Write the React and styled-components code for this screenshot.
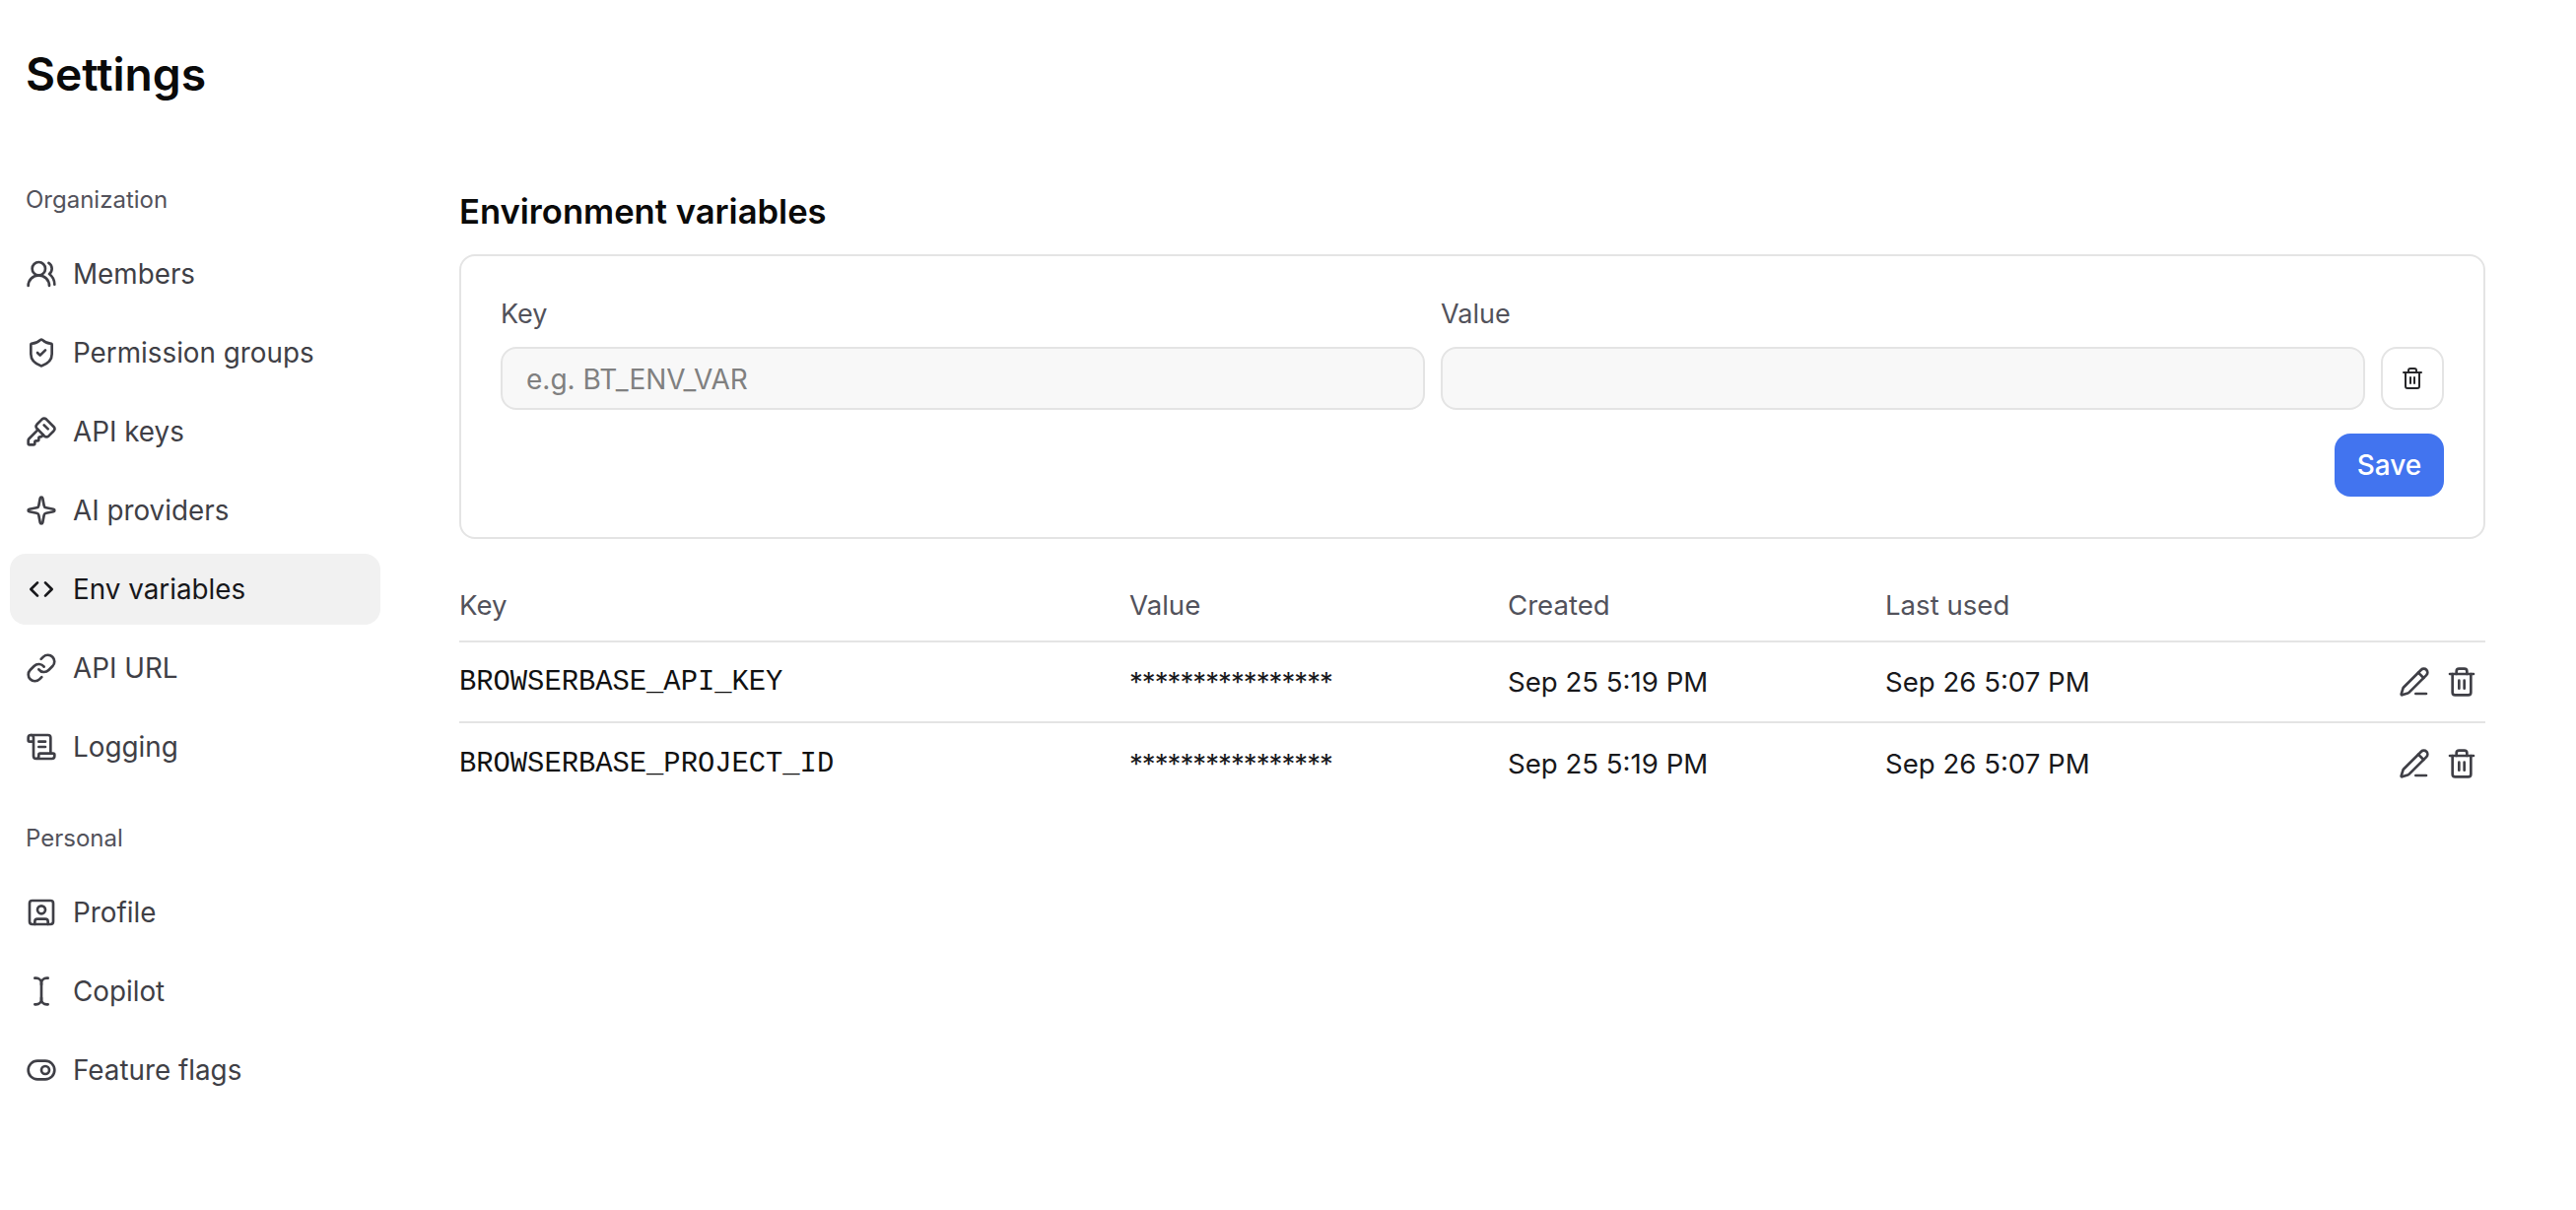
import React from "react";
import styled, { createGlobalStyle } from "styled-components";
import {
  UsersRound,
  ShieldCheck,
  KeySquare,
  Sparkle,
  ChevronsLeftRight,
  Link,
  ScrollText,
  SquareUser,
  TextCursor,
  ToggleRight,
  Trash2,
  PencilLine,
} from "lucide-react";

const GlobalStyle = createGlobalStyle`
  * {
    box-sizing: border-box;
  }
  body {
    margin: 0;
    background: #fff;
    font-family: Inter, "Liberation Sans", sans-serif;
  }
`;

const Page = styled.div`
  width: 2614px;
  height: 1228px;
  overflow: hidden;
  padding: 0 92px 0 10px;
`;

const Title = styled.h1`
  margin: 0;
  padding: 45px 0 0 16px;
  height: 119px;
  font-size: 46.2px;
  line-height: 60px;
  font-weight: 600;
  color: #0a0a0a;
`;

const Layout = styled.div`
  display: flex;
  gap: 80px;
  padding-top: 66px;
`;

const Sidebar = styled.nav`
  width: 376px;
  flex: none;
  display: flex;
  flex-direction: column;
`;

const GroupLabel = styled.div`
  height: 36px;
  line-height: 36px;
  padding-left: 16px;
  margin-top: ${(props) => (props.$first ? "0" : "39px")};
  margin-bottom: 21px;
  font-size: 24px;
  color: #52525b;
`;

const NavList = styled.div`
  display: flex;
  flex-direction: column;
  gap: 8px;
`;

const NavItem = styled.div`
  height: 72px;
  border-radius: 16px;
  padding-left: 16px;
  display: flex;
  align-items: center;
  gap: 16px;
  font-size: 27.8px;
  color: ${(props) => (props.$active ? "#18181b" : "#3f3f46")};
  background: ${(props) => (props.$active ? "#f1f1f1" : "transparent")};
  svg {
    flex: none;
  }
`;

const Main = styled.main`
  flex: 1;
  min-width: 0;
  padding-top: 5px;
`;

const Heading = styled.h2`
  margin: 0 0 20px;
  font-size: 34.6px;
  line-height: 48px;
  font-weight: 600;
  color: #0a0a0a;
`;

const Card = styled.section`
  height: 289px;
  border: 2px solid #e4e4e4;
  border-radius: 16px;
  padding: 41px 40px 0;
  margin-bottom: 28px;
`;

const FormGrid = styled.div`
  display: grid;
  grid-template-columns: 938px 938px 1fr;
  column-gap: 16px;
`;

const FieldLabel = styled.label`
  display: block;
  height: 36px;
  line-height: 36px;
  margin-bottom: 15px;
  font-size: 27px;
  color: #52525b;
`;

const TextInput = styled.input`
  display: block;
  width: 100%;
  height: 64px;
  border: 2px solid #e4e4e4;
  border-radius: 16px;
  background: #f8f8f8;
  padding: 2px 24px 0;
  font-family: inherit;
  font-size: 28px;
  color: #18181b;
  outline: none;
  &::placeholder {
    color: #808080;
    opacity: 1;
  }
`;

const IconButton = styled.button`
  align-self: end;
  height: 64px;
  border: 2px solid #e4e4e4;
  border-radius: 16px;
  background: #fff;
  padding: 0;
  display: flex;
  align-items: center;
  justify-content: center;
  color: #27272a;
`;

const CardFooter = styled.div`
  display: flex;
  justify-content: flex-end;
  margin-top: 24px;
`;

const SaveButton = styled.button`
  width: 111px;
  height: 64px;
  border: none;
  border-radius: 16px;
  background: #4274ef;
  color: #fff;
  font-family: inherit;
  font-size: 28px;
  font-weight: 500;
`;

const Row = styled.div`
  display: grid;
  grid-template-columns: 680px 384px 383px 1fr 100px;
  align-items: center;
  height: ${(props) => (props.$header ? "77px" : "82px")};
  padding-top: ${(props) => (props.$header ? "2px" : "0")};
  border-bottom: ${(props) => (props.$last ? "none" : "2px solid #e4e4e4")};
  font-size: 27.6px;
  color: ${(props) => (props.$header ? "#52525b" : "#18181b")};
`;

const Mono = styled.span`
  font-family: "Liberation Mono", monospace;
  font-size: 28.8px;
  color: #111;
`;

const Masked = styled.span`
  letter-spacing: -0.95px;
`;

const RowActions = styled.div`
  display: flex;
  justify-content: flex-end;
  gap: 16px;
  padding-right: 8px;
  color: #3f3f46;
`;

const organization = [
  { label: "Members", icon: UsersRound },
  { label: "Permission groups", icon: ShieldCheck },
  { label: "API keys", icon: KeySquare },
  { label: "AI providers", icon: Sparkle },
  { label: "Env variables", icon: ChevronsLeftRight, active: true },
  { label: "API URL", icon: Link },
  { label: "Logging", icon: ScrollText },
];

const personal = [
  { label: "Profile", icon: SquareUser },
  { label: "Copilot", icon: TextCursor },
  { label: "Feature flags", icon: ToggleRight },
];

const variables = [
  { key: "BROWSERBASE_API_KEY" },
  { key: "BROWSERBASE_PROJECT_ID" },
];

function NavGroup({ items }) {
  return (
    <NavList>
      {items.map((item) => (
        <NavItem key={item.label} $active={item.active}>
          <item.icon size={32} strokeWidth={2} />
          {item.label}
        </NavItem>
      ))}
    </NavList>
  );
}

export default function App() {
  return (
    <Page>
      <GlobalStyle />
      <Title>Settings</Title>
      <Layout>
        <Sidebar>
          <GroupLabel $first>Organization</GroupLabel>
          <NavGroup items={organization} />
          <GroupLabel>Personal</GroupLabel>
          <NavGroup items={personal} />
        </Sidebar>
        <Main>
          <Heading>Environment variables</Heading>
          <Card>
            <FormGrid>
              <div>
                <FieldLabel>Key</FieldLabel>
                <TextInput placeholder="e.g. BT_ENV_VAR" />
              </div>
              <div>
                <FieldLabel>Value</FieldLabel>
                <TextInput />
              </div>
              <IconButton>
                <Trash2 size={24} strokeWidth={2} />
              </IconButton>
            </FormGrid>
            <CardFooter>
              <SaveButton>Save</SaveButton>
            </CardFooter>
          </Card>
          <Row $header>
            <span>Key</span>
            <span>Value</span>
            <span>Created</span>
            <span>Last used</span>
            <span />
          </Row>
          {variables.map((row, index) => (
            <Row key={row.key} $last={index === variables.length - 1}>
              <Mono>{row.key}</Mono>
              <Masked>****************</Masked>
              <span>Sep 25 5:19 PM</span>
              <span>Sep 26 5:07 PM</span>
              <RowActions>
                <PencilLine size={32} strokeWidth={2} />
                <Trash2 size={32} strokeWidth={2} />
              </RowActions>
            </Row>
          ))}
        </Main>
      </Layout>
    </Page>
  );
}
